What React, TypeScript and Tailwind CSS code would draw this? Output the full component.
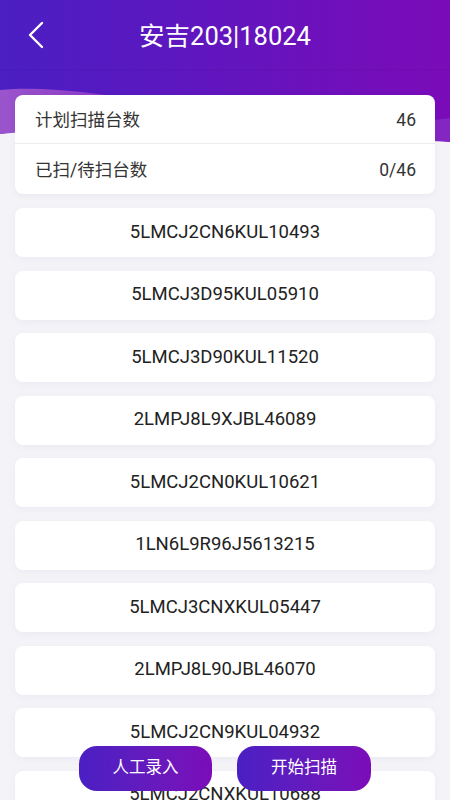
import React from "react";

const items = [
  "5LMCJ2CN6KUL10493",
  "5LMCJ3D95KUL05910",
  "5LMCJ3D90KUL11520",
  "2LMPJ8L9XJBL46089",
  "5LMCJ2CN0KUL10621",
  "1LN6L9R96J5613215",
  "5LMCJ3CNXKUL05447",
  "2LMPJ8L90JBL46070",
  "5LMCJ2CN9KUL04932",
  "5LMCJ2CNXKUL10688",
];

export default function App() {
  return (
    <div
      className="relative h-[800px] w-[450px] overflow-hidden bg-[#f4f4f8]"
      style={{ fontFamily: "Roboto, 'Noto Sans CJK SC', sans-serif" }}
    >
      {/* purple backdrop with wave */}
      <svg
        className="absolute left-0 top-0"
        width="450"
        height="150"
        viewBox="0 0 450 150"
      >
        <defs>
          <linearGradient id="hg" x1="0" y1="0" x2="1" y2="0">
            <stop offset="0" stopColor="#4a1fc3" />
            <stop offset="1" stopColor="#7b0bb9" />
          </linearGradient>
          <linearGradient id="hg2" x1="0" y1="0" x2="1" y2="0">
            <stop offset="0" stopColor="#9a55cc" />
            <stop offset="1" stopColor="#8a2fc4" />
          </linearGradient>
        </defs>
        <path d="M0 0 H450 V142 C380 130 300 120 225 118 C140 116 60 125 0 134 Z" fill="url(#hg)" />
        <path d="M0 90 C40 86 90 92 140 100 L140 130 C90 128 40 130 0 134 Z" fill="url(#hg2)" />
        <path d="M330 140 C380 128 420 122 450 118 V142 C420 140 380 138 330 140 Z" fill="#8426c2" />
        <rect x="0" y="69" width="450" height="1" fill="#000" opacity="0.06" />
      </svg>

      <div className="relative flex flex-col">
        {/* header */}
        <div className="relative flex h-[70px] items-center justify-center">
          <svg
            className="absolute left-[26px] top-[21px]"
            width="20"
            height="28"
            viewBox="0 0 20 28"
            fill="none"
          >
            <path d="M16 2 L4 14 L16 26" stroke="white" strokeWidth="2.4" strokeLinecap="round" strokeLinejoin="round" />
          </svg>
          <span className="pt-[2px] text-[25.5px] text-white">安吉203|18024</span>
        </div>

        {/* summary card */}
        <div className="mx-[15px] mt-[25px] rounded-[8px] bg-white shadow-[0_2px_6px_rgba(60,40,120,0.06)]">
          <div className="flex h-[49px] items-center justify-between border-b border-[#ececf0] pl-5 pr-[19px] pt-[3px] text-[17.5px] text-[#333]">
            <span>计划扫描台数</span>
            <span>46</span>
          </div>
          <div className="flex h-[50px] items-center justify-between pl-5 pr-[19px] pt-[3px] text-[17.5px] text-[#333]">
            <span>已扫/待扫台数</span>
            <span>0/46</span>
          </div>
        </div>

        {/* list */}
        <div className="mx-[15px] mt-[14px] flex flex-col gap-[13.5px]">
          {items.map((it) => (
            <div
              key={it}
              className="flex h-[49px] items-center justify-center rounded-[8px] bg-white text-[18.5px] text-[#222] shadow-[0_2px_8px_rgba(60,40,120,0.05)]"
            >
              {it}
            </div>
          ))}
        </div>
      </div>

      {/* bottom buttons */}
      <div className="absolute bottom-[9px] left-0 right-0 flex justify-center gap-[25px]">
        <button className="flex h-[45px] w-[133px] items-center justify-center rounded-[18px] bg-gradient-to-r from-[#4a1fc3] to-[#7b0bb9] text-[16.5px] text-white">
          人工录入
        </button>
        <button className="flex h-[45px] w-[134px] items-center justify-center rounded-[18px] bg-gradient-to-r from-[#4a1fc3] to-[#7b0bb9] text-[16.5px] text-white">
          开始扫描
        </button>
      </div>
    </div>
  );
}
